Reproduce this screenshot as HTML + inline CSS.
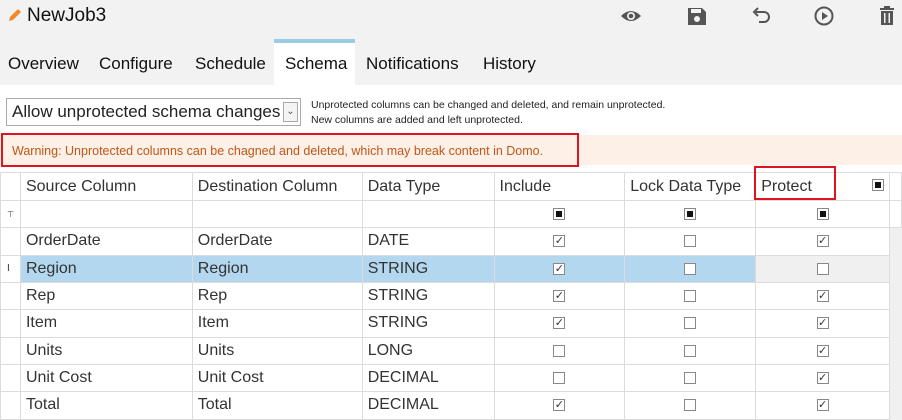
<!DOCTYPE html>
<html><head><meta charset="utf-8"><style>
*{margin:0;padding:0;box-sizing:border-box}
body{width:902px;height:420px;overflow:hidden;background:#fff;font-family:"Liberation Sans",sans-serif;color:#222;position:relative}
.top{position:absolute;left:0;top:0;width:902px;height:85px;background:#f2f2f2}
.title{position:absolute;left:27px;top:5px;font-size:19px;color:#111}
.tab{position:absolute;top:54px;font-size:17px;color:#111}
.sel{position:absolute;left:274px;top:39px;width:81px;height:46px;background:#fff;border-top:4px solid #9ccbe8}
.ico{position:absolute;top:4px}
.dd{position:absolute;left:6px;top:98px;width:295px;height:28px;border:1px solid #aaa;font-size:17px;padding:3px 5px;color:#222}
.dd .ar{position:absolute;right:2px;top:3px;width:15px;height:20px;border:1px solid #aaa;background:#f4f4f4;font-size:10px;text-align:center;line-height:18px;color:#555}
.note{position:absolute;left:311px;top:98px;font-size:10.5px;line-height:15px;color:#222}
.warn{position:absolute;left:0;top:135px;width:902px;height:30px;background:#fdf0e6}
.wbox{position:absolute;left:1px;top:133px;width:578px;height:34px;border:2px solid #e0141e;font-size:12.5px;color:#c0561a;padding:9px 0 0 9px}
table{position:absolute;left:0;top:172px;border-collapse:collapse;table-layout:fixed}
td{border:1px solid #dcdcdc;height:27.33px;font-size:16px;padding:0 0 0 5px;color:#333;white-space:nowrap;overflow:hidden}
tr.h td{height:28px;color:#333}
td.c{text-align:center;padding:0}
.cb{display:inline-block;width:12px;height:12px;border:1px solid #888;background:#fff;vertical-align:middle;position:relative;font-size:11px;line-height:10px;text-align:center;color:#333}
.cb.f::after{content:"";position:absolute;left:2px;top:2px;width:6px;height:6px;background:#111}
tr.s td{background:#b3d7ee}
tr.s td.p{background:#f0f0f0}
.sb{position:absolute;left:890px;top:228px;width:12px;height:192px;background:#f0f0f0}
.pbox{position:absolute;left:754px;top:166px;width:82px;height:34px;border:2px solid #e0141e}
</style></head><body>
<div class="top"></div>
<svg style="position:absolute;left:8px;top:8px" width="14" height="14" viewBox="0 0 14 14"><path d="M1 13 L2 9 L10 1 L13 4 L5 12 Z" fill="#f08a24"/></svg>
<div class="title">NewJob3</div>
<div class="sel"></div>
<div class="tab" style="left:8px">Overview</div>
<div class="tab" style="left:99px">Configure</div>
<div class="tab" style="left:195px">Schedule</div>
<div class="tab" style="left:285px">Schema</div>
<div class="tab" style="left:366px">Notifications</div>
<div class="tab" style="left:483px">History</div>
<svg class="ico" style="left:620px" width="22" height="24" viewBox="0 0 22 24"><path d="M1 12 Q11 2 21 12 Q11 22 1 12Z" fill="#555"/><circle cx="11" cy="12" r="4" fill="#f2f2f2"/><circle cx="11" cy="12" r="2.3" fill="#555"/></svg>
<svg class="ico" style="left:687px" width="20" height="24" viewBox="0 0 20 24"><path d="M1 4 H15 L19 8 V21 H1 Z" fill="#555"/><rect x="4" y="5" width="10" height="4" fill="#f2f2f2"/><circle cx="10" cy="15" r="3" fill="#f2f2f2"/></svg>
<svg class="ico" style="left:751px" width="20" height="24" viewBox="0 0 20 24"><path d="M5 8 H13 A5 5 0 0 1 13 18 H8" fill="none" stroke="#555" stroke-width="2"/><path d="M7 4 L3 8 L7 12" fill="none" stroke="#555" stroke-width="2"/></svg>
<svg class="ico" style="left:813px" width="22" height="24" viewBox="0 0 22 24"><circle cx="11" cy="12" r="8.5" fill="none" stroke="#555" stroke-width="2"/><path d="M9 8 L15 12 L9 16Z" fill="#555"/></svg>
<svg class="ico" style="left:878px" width="18" height="24" viewBox="0 0 18 24"><rect x="2" y="4" width="14" height="2" fill="#555"/><rect x="6" y="2" width="6" height="2" fill="#555"/><path d="M3 7 H15 V21 H3Z" fill="#555"/><rect x="6" y="9" width="1.5" height="10" fill="#f2f2f2"/><rect x="10.5" y="9" width="1.5" height="10" fill="#f2f2f2"/></svg>
<div class="dd">Allow unprotected schema changes<div class="ar">&#8964;</div></div>
<div class="note">Unprotected columns can be changed and deleted, and remain unprotected.<br>New columns are added and left unprotected.</div>
<div class="warn"></div>
<div class="wbox">Warning: Unprotected columns can be chagned and deleted, which may break content in Domo.</div>
<table>
<colgroup><col style="width:20px"><col style="width:172px"><col style="width:170px"><col style="width:132px"><col style="width:131px"><col style="width:131px"><col style="width:134px"><col style="width:12px"></colgroup>
<tr class="h"><td></td><td>Source Column</td><td>Destination Column</td><td>Data Type</td><td>Include</td><td>Lock Data Type</td><td>Protect</td><td class="c" style="border-left:none"></td></tr>
<tr><td style="font-size:8px;padding-left:6px">&#8868;</td><td></td><td></td><td></td><td class="c"><span class="cb f"></span></td><td class="c"><span class="cb f"></span></td><td class="c"><span class="cb f"></span></td><td></td></tr>
<tr><td></td><td>OrderDate</td><td>OrderDate</td><td>DATE</td><td class="c"><span class="cb">&#10003;</span></td><td class="c"><span class="cb"></span></td><td class="c"><span class="cb">&#10003;</span></td><td></td></tr>
<tr class="s"><td style="background:#fff;font-size:10px;padding-left:6px">I</td><td>Region</td><td>Region</td><td>STRING</td><td class="c"><span class="cb">&#10003;</span></td><td class="c"><span class="cb"></span></td><td class="c p"><span class="cb"></span></td><td></td></tr>
<tr><td></td><td>Rep</td><td>Rep</td><td>STRING</td><td class="c"><span class="cb">&#10003;</span></td><td class="c"><span class="cb"></span></td><td class="c"><span class="cb">&#10003;</span></td><td></td></tr>
<tr><td></td><td>Item</td><td>Item</td><td>STRING</td><td class="c"><span class="cb">&#10003;</span></td><td class="c"><span class="cb"></span></td><td class="c"><span class="cb">&#10003;</span></td><td></td></tr>
<tr><td></td><td>Units</td><td>Units</td><td>LONG</td><td class="c"><span class="cb"></span></td><td class="c"><span class="cb"></span></td><td class="c"><span class="cb">&#10003;</span></td><td></td></tr>
<tr><td></td><td>Unit Cost</td><td>Unit Cost</td><td>DECIMAL</td><td class="c"><span class="cb"></span></td><td class="c"><span class="cb"></span></td><td class="c"><span class="cb">&#10003;</span></td><td></td></tr>
<tr><td></td><td>Total</td><td>Total</td><td>DECIMAL</td><td class="c"><span class="cb">&#10003;</span></td><td class="c"><span class="cb"></span></td><td class="c"><span class="cb">&#10003;</span></td><td></td></tr>
</table>
<span class="cb f" style="position:absolute;left:872px;top:179px"></span>
<div class="sb"></div>
<div class="pbox"></div>
</body></html>
